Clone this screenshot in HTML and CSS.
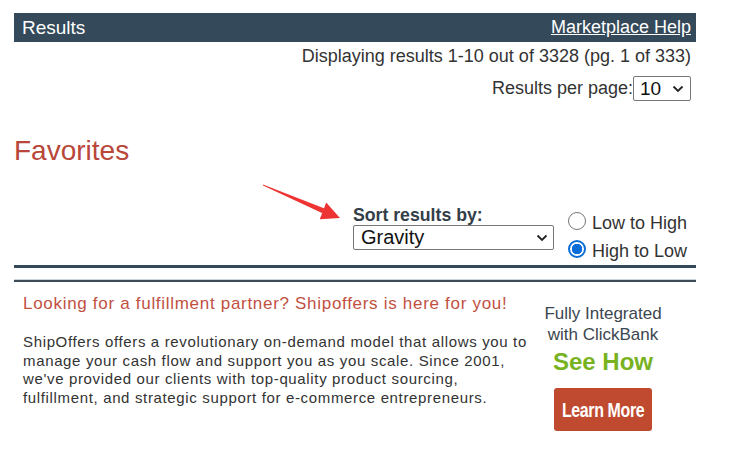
FILE: index.html
```html
<!DOCTYPE html>
<html>
<head>
<meta charset="utf-8">
<link rel="stylesheet" href="styles.css">
</head>
<body>
<div class="page">
  <div class="bar">
    <span class="bar-title">Results</span>
    <a class="bar-link" href="#">Marketplace Help</a>
  </div>
  <div class="info">Displaying results 1-10 out of 3328 (pg. 1 of 333)</div>
  <div class="perpage">
    <span class="perpage-label">Results per page:</span>
    <span class="select small"><span>10</span><svg width="12" height="8" viewBox="0 0 12 8"><path d="M1.5 1.5 L6 6 L10.5 1.5" fill="none" stroke="#222" stroke-width="1.8"/></svg></span>
  </div>
  <h1 class="fav">Favorites</h1>
  <div class="sort">
    <div class="sort-field">
      <div class="sort-label">Sort results by:</div>
      <span class="select big"><span>Gravity</span><svg width="12" height="8" viewBox="0 0 12 8"><path d="M1.5 1.5 L6 6 L10.5 1.5" fill="none" stroke="#222" stroke-width="1.8"/></svg></span>
    </div>
    <div class="radios">
      <label class="radio"><span class="dot"></span><span class="rlabel">Low to High</span></label>
      <label class="radio"><span class="dot on"></span><span class="rlabel">High to Low</span></label>
    </div>
  </div>
  <div class="rule"></div>
  <div class="banner">
    <div class="ban-left">
      <div class="ban-title">Looking for a fulfillment partner? Shipoffers is here for you!</div>
      <p class="ban-text">ShipOffers offers a revolutionary on-demand model that allows you to<br>manage your cash flow and support you as you scale. Since 2001,<br>we've provided our clients with top-quality product sourcing,<br>fulfillment, and strategic support for e-commerce entrepreneurs.</p>
    </div>
    <div class="ban-right">
      <div class="ban-int">Fully Integrated<br>with ClickBank</div>
      <div class="ban-see">See How</div>
      <div class="ban-btn"><span class="ban-btn-text">Learn More</span></div>
    </div>
  </div>
  <svg class="arrow" width="80" height="50" viewBox="0 0 80 50">
    <polygon points="0,12.5 61.5,36.6 59.5,41.2 0,13.5" fill="#ee3333"/>
    <polygon points="77,46 63.2,30.5 56.8,47.3" fill="#ee3333"/>
  </svg>
</div>
</body>
</html>
```
FILE: styles.css
```css
* { box-sizing: border-box; }
body {
  margin: 0;
  background: #fff;
  font-family: "Liberation Sans", Arial, sans-serif;
  color: #333;
}
.page {
  position: relative;
  width: 682px;
  margin-left: 14px;
  padding-top: 13px;
}
.bar {
  height: 29px;
  background: #34495a;
  display: flex;
  align-items: center;
  justify-content: space-between;
  padding: 0 5px 0 8px;
}
.bar-title {
  color: #fff;
  font-size: 19px;
}
.bar-link {
  color: #fff;
  font-size: 18px;
  text-decoration: underline;
}
.info {
  text-align: right;
  font-size: 18px;
  padding-right: 5px;
  margin-top: 4px;
  line-height: 20px;
  color: #333;
}
.perpage {
  display: flex;
  justify-content: flex-end;
  align-items: center;
  padding-right: 5px;
  margin-top: 10px;
  font-size: 18px;
}
.select {
  display: inline-flex;
  align-items: center;
  justify-content: space-between;
  border: 1px solid #767676;
  border-radius: 2px;
  background: #fff;
  color: #111;
}
.select.small {
  width: 58px;
  height: 25px;
  padding: 0 6px 0 6px;
  font-size: 19px;
}
.select.big {
  width: 201px;
  height: 25px;
  padding: 0 5px 0 7px;
  font-size: 20px;
}
.fav {
  margin: 34px 0 0 0;
  font-size: 28px;
  font-weight: normal;
  color: #b8473a;
  line-height: 32px;
}
.sort {
  display: flex;
  justify-content: flex-end;
  align-items: flex-start;
  padding-right: 9px;
  margin-top: 39px;
}
.sort-field {
  display: flex;
  flex-direction: column;
  margin-right: 14px;
}
.sort-label {
  font-weight: bold;
  font-size: 17.7px;
  color: #333e48;
  line-height: 19px;
}
.radios {
  display: flex;
  flex-direction: column;
  margin-top: 1px;
}
.radio {
  display: flex;
  align-items: center;
  font-size: 18px;
  color: #333;
  height: 28px;
}
.rlabel {
  padding-top: 5px;
}
.dot {
  width: 18px;
  height: 18px;
  border: 1px solid #767676;
  border-radius: 50%;
  margin-right: 6px;
  background: #fff;
}
.dot.on {
  border: 2px solid #0a6ed8;
  background: radial-gradient(circle, #0a6ed8 0 5px, #fff 5.5px);
}
.rule {
  height: 3px;
  background: #34495a;
  margin-top: 2px;
}
.banner {
  margin-top: 11px;
  border-top: 1px solid #c9d6df;
  box-shadow: inset 0 2px 0 #3e4c58;
  padding-top: 2px;
  display: flex;
  height: 160px;
}
.ban-left {
  width: 520px;
  padding-left: 9px;
  flex-shrink: 0;
}
.ban-title {
  color: #c1503f;
  font-size: 17px;
  letter-spacing: 0.7px;
  margin-top: 12px;
  line-height: 20px;
  white-space: nowrap;
}
.ban-text {
  margin: 19px 0 0 0;
  font-size: 15px;
  letter-spacing: 0.65px;
  line-height: 18.7px;
  color: #333;
  white-space: nowrap;
}
.ban-right {
  flex: 1;
  display: flex;
  flex-direction: column;
  align-items: center;
  padding-right: 24px;
  padding-top: 21px;
}
.ban-int {
  font-size: 17px;
  line-height: 21px;
  text-align: center;
  color: #3b4650;
}
.ban-see {
  font-size: 24px;
  font-weight: bold;
  color: #78b31f;
  margin-top: 4px;
  line-height: 26px;
}
.ban-btn {
  margin-top: 13px;
  width: 98px;
  height: 43px;
  background: #c04a2f;
  border-radius: 3px;
  display: flex;
  align-items: center;
  justify-content: center;
}
.ban-btn-text {
  color: #fff;
  font-weight: bold;
  font-size: 21px;
  letter-spacing: -0.5px;
  white-space: nowrap;
  transform: scaleX(0.76);
}
.arrow {
  position: absolute;
  left: 249px;
  top: 172px;
}
```
